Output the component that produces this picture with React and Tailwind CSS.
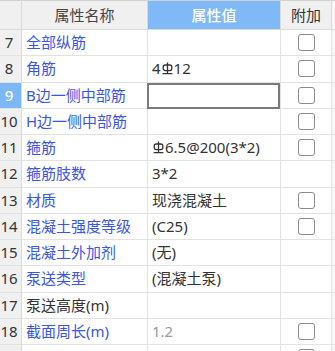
const rows = [
  { n: 7, name: '全部纵筋', value: '', check: true },
  { n: 8, name: '角筋', value: ['4', 'G', '12'], check: true },
  { n: 9, name: 'B边一侧中部筋', value: '', check: true, active: true },
  { n: 10, name: 'H边一侧中部筋', value: '', check: true },
  { n: 11, name: '箍筋', value: ['', 'G', '6.5@200(3*2)'], check: true },
  { n: 12, name: '箍筋肢数', value: '3*2' },
  { n: 13, name: '材质', value: '现浇混凝土', check: true },
  { n: 14, name: '混凝土强度等级', value: '(C25)', check: true },
  { n: 15, name: '混凝土外加剂', value: '(无)' },
  { n: 16, name: '泵送类型', value: '(混凝土泵)' },
  { n: 17, name: '泵送高度(m)', value: '', plain: true },
  { n: 18, name: '截面周长(m)', value: '1.2', check: true, muted: true },
  { n: 19, name: '', value: '', check: true, hidden: true },
];

// steel grade mark (HRB400)
function Grade() {
  return (
    <svg width="11" height="13" viewBox="0 0 11 13" className="inline-block mx-[1px] -mt-[3px] align-middle text-[#333]">
      <rect x="1.2" y="3" width="8.6" height="5.6" rx="2" fill="none" stroke="currentColor" strokeWidth="1.3" />
      <path d="M5.5 0.5V11.6M0.6 11.6H10.4" stroke="currentColor" strokeWidth="1.3" fill="none" />
    </svg>
  );
}

function Check() {
  return <div className="w-[17px] h-[17px] rounded-[3px] border-[1.5px] border-[#8a8a8a] bg-white" />;
}

function Value({ v, muted }) {
  if (Array.isArray(v)) {
    return (
      <span className="text-[#333]">
        {v[0]}
        <Grade />
        {v[2]}
      </span>
    );
  }
  return <span className={muted ? 'text-[#9a9a9a]' : 'text-[#333]'}>{v}</span>;
}

export default function App() {
  return (
    <div
      className="w-[335px] h-[351px] overflow-hidden bg-white border-t border-[#d2d2d2] text-[15px] leading-none"
      style={{ fontFamily: "'Noto Sans', 'Noto Sans CJK SC', sans-serif" }}
    >
      {/* header */}
      <div className="grid grid-cols-[22px_126px_133px_51px_1fr] h-[29px] bg-[#f0f0f0] border-b border-[#dadada]">
        <div className="border-r border-[#dadada]" />
        <div className="border-r border-[#dadada] flex items-center justify-center text-[#444]">属性名称</div>
        <div className="border-r border-[#dadada] bg-[#80b9f7] flex items-center justify-center text-white font-medium">属性值</div>
        <div className="border-r border-[#dadada] flex items-center justify-center text-[#333]">附加</div>
        <div className="bg-[#f7f7f7]" />
      </div>

      {rows.map((r) => (
        <div key={r.n} className="grid grid-cols-[22px_126px_133px_51px_1fr] h-[26.25px] border-b border-[#e2e2e2]">
          <div
            className={`border-r border-[#dadada] flex items-center justify-center pr-[3px] ${
              r.active ? 'bg-[#7db8f6] text-white font-medium' : 'bg-[#f0f0f0] text-[#333]'
            }`}
          >
            {!r.hidden && r.n}
          </div>
          <div className={`border-r border-[#e2e2e2] flex items-center pl-[4px] whitespace-nowrap ${r.plain ? 'text-[#333]' : 'text-[#3a55ec]'}`}>
            {r.name}
          </div>
          <div className="relative border-r border-[#e2e2e2] flex items-center pl-[4px] whitespace-nowrap">
            {r.active && <div className="absolute -left-px top-0 -bottom-px right-0 border-2 border-[#7a7a7a]" />}
            <Value v={r.value} muted={r.muted} />
          </div>
          <div className="border-r border-[#e2e2e2] flex items-center justify-center">{r.check && <Check />}</div>
          <div className="bg-[#f7f7f7]" />
        </div>
      ))}
    </div>
  );
}
